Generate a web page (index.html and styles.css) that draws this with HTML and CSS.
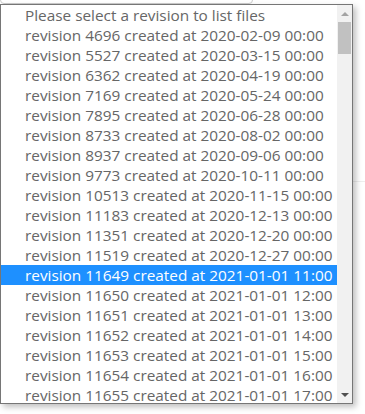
FILE: index.html
```html
<!DOCTYPE html>
<html lang="en">
<head>
    <meta charset="UTF-8">
    <meta name="viewport" content="width=device-width, initial-scale=1.0">
    <title>Revision files</title>
    <link rel="stylesheet" href="styles.css">
</head>
<body>
    <main class="page">
        <div class="revision-field">
            <div class="select-trigger"></div>
        </div>
        <section class="file-section"></section>

        <!-- open dropdown of the revision select -->
        <div class="listbox">
            <ul class="options">
                <li class="option">Please select a revision to list files</li>
                <li class="option">revision 4696 created at 2020-02-09 00:00</li>
                <li class="option">revision 5527 created at 2020-03-15 00:00</li>
                <li class="option">revision 6362 created at 2020-04-19 00:00</li>
                <li class="option">revision 7169 created at 2020-05-24 00:00</li>
                <li class="option">revision 7895 created at 2020-06-28 00:00</li>
                <li class="option">revision 8733 created at 2020-08-02 00:00</li>
                <li class="option">revision 8937 created at 2020-09-06 00:00</li>
                <li class="option">revision 9773 created at 2020-10-11 00:00</li>
                <li class="option">revision 10513 created at 2020-11-15 00:00</li>
                <li class="option">revision 11183 created at 2020-12-13 00:00</li>
                <li class="option">revision 11351 created at 2020-12-20 00:00</li>
                <li class="option">revision 11519 created at 2020-12-27 00:00</li>
                <li class="option selected">revision 11649 created at 2021-01-01 11:00</li>
                <li class="option">revision 11650 created at 2021-01-01 12:00</li>
                <li class="option">revision 11651 created at 2021-01-01 13:00</li>
                <li class="option">revision 11652 created at 2021-01-01 14:00</li>
                <li class="option">revision 11653 created at 2021-01-01 15:00</li>
                <li class="option">revision 11654 created at 2021-01-01 16:00</li>
                <li class="option">revision 11655 created at 2021-01-01 17:00</li>
            </ul>
            <div class="scrollbar">
                <span class="scroll-arrow up"></span>
                <div class="scroll-track">
                    <div class="scroll-thumb"></div>
                </div>
                <span class="scroll-arrow down"></span>
            </div>
        </div>
    </main>
</body>
</html>
```

FILE: styles.css
```css
/* Base styles */
* {
    margin: 0;
    padding: 0;
    box-sizing: border-box;
}

body {
    background-color: #ffffff;
    color: #666666;
    font-family: 'Open Sans', sans-serif;
    overflow: hidden;
}

.page {
    position: relative;
    display: flow-root;
    height: 414px;
}

/* select behind the open list, scrolled mostly out of view */
.revision-field {
    margin-top: -35px;
    width: 253px;
}

.select-trigger {
    height: 39px;
    border: 1px solid #cccccc;
    border-radius: 4px;
}

.file-section {
    margin-top: 177px;
    border-top: 1px solid #eeeeee;
}

/* Dropdown list */
.listbox {
    position: absolute;
    top: 4px;
    left: 0;
    width: 353px;
    height: 400px;
    display: flex;
    background: #ffffff;
    border: 1px solid #767676;
    box-shadow: 3px 3px 6px rgba(0, 0, 0, 0.25);
    overflow: hidden;
}

.options {
    flex: 1;
    list-style: none;
}

.option {
    height: 20px;
    padding-left: 24px;
    font-size: 15.35px;
    line-height: 20px;
    white-space: nowrap;
}

.option.selected {
    background: #1e90ff;
    color: #ffffff;
}

.scrollbar {
    width: 15px;
    display: flex;
    flex-direction: column;
    background: #f1f1f1;
}

.scroll-arrow {
    height: 17px;
    display: flex;
    align-items: center;
    justify-content: center;
}

.scroll-arrow::before {
    content: '';
    border-left: 4px solid transparent;
    border-right: 4px solid transparent;
}

.scroll-arrow.up::before {
    border-bottom: 4px solid #a3a3a3;
}

.scroll-arrow.down::before {
    border-top: 4px solid #505050;
}

.scroll-track {
    flex: 1;
}

.scroll-thumb {
    height: 32px;
    margin: 0 1px;
    background: #c1c1c1;
}
```
